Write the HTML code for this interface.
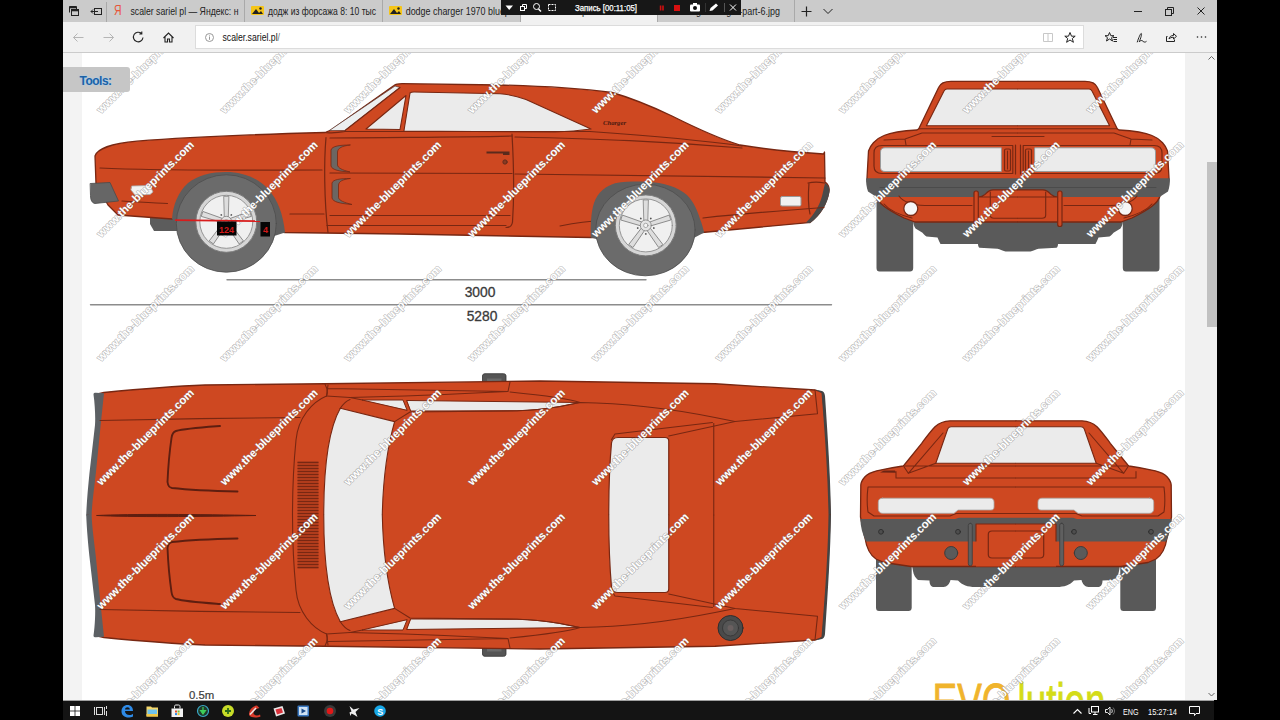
<!DOCTYPE html>
<html><head><meta charset="utf-8"><title>scaler.sariel.pl</title>
<style>
html,body{margin:0;padding:0;background:#000;}
body{width:1280px;height:720px;position:relative;overflow:hidden;font-family:"Liberation Sans",sans-serif;}
.abs{position:absolute;}
#tabbar{left:63px;top:0;width:1154px;height:22px;background:#cbcbcb;}
#addr{left:63px;top:22px;width:1154px;height:31px;background:#f1f1f1;border-bottom:1px solid #cbcbcb;box-sizing:border-box;}
#url{left:195px;top:25px;width:889px;height:24px;background:#fff;border:1px solid #dcdcdc;box-sizing:border-box;}
.tab{top:0;height:22px;font-size:11px;line-height:22px;color:#222;white-space:nowrap;overflow:hidden;box-sizing:border-box;border-right:1px solid #a9a9a9;}
#page{left:63px;top:53px;width:1154px;height:647px;background:#fff;}
#task{left:63px;top:700px;width:1151px;height:20px;background:linear-gradient(#a0a0a0 0,#a0a0a0 1px,#141414 1px);}
</style></head><body>
<div class="abs" id="tabbar"></div>
<div class="abs" id="addr"></div>
<div class="abs" id="url"></div>
<div class="abs" id="page"></div>
<!--CHROME--><!-- tab bar content -->
<svg class="abs" style="left:63px;top:0" width="1154" height="22" viewBox="63 0 1154 22">
 <g fill="none" stroke="#222" stroke-width="1">
  <path d="M69.500 12.500V6.500H76.500V9"/><path d="M69.500 7.500H76.500" stroke-width="1.600"/><rect x="71.500" y="9.500" width="7" height="6" fill="#cbcbcb"/><path d="M71.500 10.500H78.500" stroke-width="1.600"/>
  <rect x="94.500" y="8.500" width="7" height="6"/><path d="M91 11.500H98M93 9.500L91 11.500L93 13.500"/>
 </g>
</svg>
<div class="abs" style="left:106px;top:2px;width:1px;height:20px;background:#a9a9a9"></div>
<div class="abs tab" style="left:107px;width:138px;"><span class="abs" style="left:7px;top:0;color:#e8553a;font-size:14.500px;line-height:21px;transform:scaleX(.72);transform-origin:0 0">Я</span><svg class="abs" style="left:0;top:0" width="138" height="22"><text x="23.500" y="15" font-size="11" fill="#222" textLength="108" lengthAdjust="spacingAndGlyphs">scaler sariel pl — Яндекс: н</text></svg></div>
<div class="abs tab" style="left:245px;width:138px;"><svg class="abs" style="left:6px;top:5px" width="13" height="11"><rect x="0" y="1" width="13" height="9" rx="1" fill="#f5c518"/><path d="M1 9L5 4L8 8L10 6L12 9Z" fill="#222"/><circle cx="9.500" cy="3.500" r="1.200" fill="#222"/></svg><svg class="abs" style="left:0;top:0" width="138" height="22"><text x="23" y="15" font-size="11" fill="#222" textLength="108" lengthAdjust="spacingAndGlyphs">додж из форсажа 8: 10 тыс</text></svg></div>
<div class="abs tab" style="left:383px;width:138px;"><svg class="abs" style="left:6px;top:5px" width="13" height="11"><rect x="0" y="1" width="13" height="9" rx="1" fill="#f5c518"/><path d="M1 9L5 4L8 8L10 6L12 9Z" fill="#222"/><circle cx="9.500" cy="3.500" r="1.200" fill="#222"/></svg><svg class="abs" style="left:0;top:0" width="138" height="22"><text x="22.700" y="15" font-size="11" fill="#222" textLength="121" lengthAdjust="spacingAndGlyphs">dodge charger 1970 blueprints</text></svg></div>
<div class="abs tab" style="left:521px;width:136px;background:#f1f1f1;border-right:none"><svg class="abs" style="left:0;top:0" width="136" height="22"><text x="23" y="15" font-size="11" fill="#222" textLength="100" lengthAdjust="spacingAndGlyphs">The-Blueprints.com - do</text></svg></div>
<div class="abs tab" style="left:657px;width:138px;border-left:1px solid #a9a9a9"><svg class="abs" style="left:0;top:0" width="138" height="22"><text x="23" y="15" font-size="11" fill="#222" textLength="99" lengthAdjust="spacingAndGlyphs">dodge-charger-part-6.jpg</text></svg></div>
<svg class="abs" style="left:795px;top:0" width="422" height="22" viewBox="795 0 422 22" fill="none" stroke="#222" stroke-width="1">
 <path d="M801.500 11.500H811.500M806.500 6.500V16.500" stroke-width="1.200"/>
 <path d="M823.500 9L828 13.500L832.500 9"/>
 <path d="M1134 11.500H1142"/>
 <rect x="1165.500" y="9.500" width="6" height="6"/><path d="M1167.500 9.500V7.500H1173.500V13.500H1171.500"/>
 <path d="M1197.500 7.500L1204.500 14.500M1204.500 7.500L1197.500 14.500"/>
</svg>
<!-- recorder overlay -->
<div class="abs" style="left:501px;top:0;width:240px;height:15px;background:#171717;"></div>
<svg class="abs" style="left:501px;top:0" width="240" height="15" viewBox="501 0 240 15">
 <path d="M505.500 5.500H513L509.200 10Z" fill="#fff"/>
 <g fill="none" stroke="#fff" stroke-width="1"><rect x="520.500" y="6.500" width="4" height="4"/><path d="M522.500 6.500V4.500H526.500V8.500H524.500"/>
 <circle cx="536.500" cy="6.500" r="3"/><path d="M538.500 9L541 11.500" stroke-width="1.500"/>
 <rect x="548.500" y="4.500" width="7" height="6" stroke-dasharray="2 1"/></g>
 <text x="575" y="11" font-size="8.500" fill="#fff" stroke="#fff" stroke-width="0.250" font-family="Liberation Sans, sans-serif" textLength="62" lengthAdjust="spacingAndGlyphs">Запись [00:11:05]</text>
 <rect x="659.800" y="5.500" width="1.600" height="5" fill="#d01010"/><rect x="662.200" y="5.500" width="1.600" height="5" fill="#d01010"/>
 <rect x="674" y="5" width="6" height="6" fill="#d81010"/>
 <rect x="690" y="4.500" width="10" height="7" rx="1" fill="#fff"/><rect x="693" y="3" width="4" height="2" fill="#fff"/><circle cx="695" cy="8" r="2" fill="#0c0c0c"/>
 <path d="M709.500 11L710.500 8L716 3.500L718 5.500L712.500 10.500Z" fill="#fff"/>
 <path d="M724.500 3V12" stroke="#555" stroke-width="1"/><path d="M705.500 3V12" stroke="#333" stroke-width="1"/>
 <path d="M730 4.500L736 10.500M736 4.500L730 10.500" stroke="#fff" stroke-width="1"/>
</svg>
<!-- address bar -->
<svg class="abs" style="left:63px;top:22px" width="1154" height="30" viewBox="63 22 1154 30" fill="none" stroke="#222" stroke-width="1">
 <path d="M73.500 37.500H83.500M77.500 33.500L73.500 37.500L77.500 41.500" stroke="#b5b5b5"/>
 <path d="M103.500 37.500H113.500M109.500 33.500L113.500 37.500L109.500 41.500" stroke="#b5b5b5"/>
 <path d="M141.500 33.500A4.800 4.800 0 1 0 143 37.500M141.800 31.500V34H139.300" stroke-width="1.100"/>
 <path d="M163.500 38L168.500 33L173.500 38M165 37V42H167.500V39H169.500V42H172V37" stroke-width="1.100"/>
 <circle cx="209.500" cy="37.500" r="4" stroke="#999"/><path d="M209.500 36.500V39.800M209.500 34.800V35.600" stroke="#999"/>
 <g stroke="#c8c8c8"><path d="M1043.500 33.500H1052.500V41.500H1043.500ZM1048 33.500V41.500" /></g>
 <path d="M1070 32.500L1071.500 36.200H1075.200L1072.300 38.500L1073.400 42.300L1070 40L1066.600 42.300L1067.700 38.500L1064.800 36.200H1068.500Z"/>
 <path d="M1109.500 32.500L1110.800 35.700H1114L1111.500 37.700L1112.500 41L1109.500 39L1106.500 41L1107.500 37.700L1105 35.700H1108.200Z"/><path d="M1113 37.500H1117M1113.500 39.500H1117M1113.500 41.500H1117"/>
 <path d="M1137.200 42.300C1138.500 38 1140.500 33.500 1141.200 33.400C1142.300 33.800 1140.600 38.500 1139.200 41.800C1140.500 40.300 1142 40.100 1143 41.300C1144 42.400 1145.500 42.300 1146.500 41.300"/>
 <path d="M1167.500 36.500H1166.500V41.500H1174.500V39.500M1169 39C1169.500 36.500 1171 35.500 1173.500 35.500V33.500L1176.500 36.300L1173.500 39V37.300C1171.500 37.300 1170 37.800 1169 39Z"/>
 <g fill="#222" stroke="none"><circle cx="1197.500" cy="37" r="0.800"/><circle cx="1201.500" cy="37" r="0.800"/><circle cx="1205.500" cy="37" r="0.800"/></g>
</svg>
<svg class="abs" style="left:215px;top:25px" width="100" height="24"><text x="7.500" y="16" font-size="10.500" fill="#111" textLength="57.500" lengthAdjust="spacingAndGlyphs">scaler.sariel.pl<tspan fill="#777">/</tspan></text></svg>
<!-- page deco -->
<div class="abs" style="left:63px;top:53px;width:19px;height:647px;background:#f3f3f3"></div>
<div class="abs" style="left:1185px;top:53px;width:32px;height:647px;background:#f1f1f1"></div>
<div class="abs" style="left:1207px;top:162px;width:10px;height:165px;background:#c1c1c1"></div>
<svg class="abs" style="left:1203px;top:52px" width="14" height="648" viewBox="1203 52 14 648" fill="none" stroke="#666" stroke-width="1"><path d="M1208.500 59.500L1211.500 56.500L1214.500 59.500"/><path d="M1208.500 693L1211.500 696L1214.500 693"/></svg>
<div class="abs" style="z-index:5;left:63px;top:67px;width:67px;height:25px;background:#c6c6c6;border-radius:0 3px 3px 0;"></div>
<div class="abs" style="z-index:6;left:79.500px;top:73.500px;font-size:12px;font-weight:bold;color:#1b62a6;letter-spacing:-0.5px;text-shadow:0 0 2px #9ad0ff">Tools:</div>
<!--/CHROME-->
<svg class="abs" style="left:0;top:0" width="1280" height="720" viewBox="0 0 1280 720">
<!--CARS--><defs>
 <g id="rim">
  <circle r="30.500" fill="#d6d6d6" stroke="#7a7a7a" stroke-width="1"/>
  <circle r="26.500" fill="#f0f0f0" stroke="#8c8c8c" stroke-width="0.900"/>
  <g stroke="#808080" stroke-width="0.800" fill="#dedede">
   <path id="spk" d="M-2 -5L-2.600 -25.500H2.600L2 -5Z"/>
   <use href="#spk" transform="rotate(72)"/><use href="#spk" transform="rotate(144)"/><use href="#spk" transform="rotate(216)"/><use href="#spk" transform="rotate(288)"/>
  </g>
  <circle r="5.500" fill="#e4e4e4" stroke="#808080" stroke-width="0.800"/>
  <g fill="#555"><circle cx="0" cy="-8.500" r="0.900" transform="rotate(36)"/><circle cx="0" cy="-8.500" r="0.900" transform="rotate(108)"/><circle cx="0" cy="-8.500" r="0.900" transform="rotate(180)"/><circle cx="0" cy="-8.500" r="0.900" transform="rotate(252)"/><circle cx="0" cy="-8.500" r="0.900" transform="rotate(324)"/></g>
  <circle r="2.200" fill="#f4f4f4" stroke="#808080" stroke-width="0.600"/>
 </g>
</defs>
<!-- ============ SIDE VIEW ============ -->
<g id="side" stroke-linejoin="round" stroke-linecap="round">
 <!-- chassis bits under -->
 <path d="M150 214L178 219V231H154L150 224Z" fill="#5c5c5c"/>
 <!-- body -->
 <path d="M95 156C97 149 112 143.500 137 141.200C170 138.500 230 135 325 132.500L331 130L394 85.500C396 84 398 83.700 402 83.700L500 85C540 86 585 89 612 92.500C635 99 655 108 672 116C700 130 720 139 740 145C770 150 800 152.500 823.500 154L824.500 152L825 182C828 184 829.500 187 829 191C827 203 820 215 810 222.500C775 226 740 229 702 232.500L645 236L591 237.500L400 234L285 232.500L230 225L172 219L118 215L108 205L96 184Z" fill="#ce4821" stroke="#782712" stroke-width="1.3"/>
 <!-- rear bumper dark -->
 <path d="M825 183C828.500 185 830 188 829.500 192C827.500 204 820 216 810 223L806 222.500C815 214 821 203 823 192Z" fill="#4a4a4a"/>
 <!-- front bumper -->
 <path d="M90.500 183.500L110 182.500L118.500 201L95 203.500C92 203 90.500 200 90.500 196Z" fill="#666" stroke="#4a4a4a" stroke-width="0.800"/>
 <!-- front marker light -->
 <path d="M132 186L150 185.500L153 192L150 194.500L135 195L131 190Z" fill="#f2f2f2" stroke="#aaa" stroke-width="0.800"/>
 <!-- rear marker -->
 <rect x="780.500" y="196.500" width="20.500" height="9.500" rx="1.500" fill="#f0f0f0" stroke="#999" stroke-width="1"/>
 <!-- glass -->
 <path d="M329.500 130.400L395 86L400 87.500L345.300 130.300Z" fill="#eceff0" stroke="#5a3a34" stroke-width="0.700"/><path d="M345.300 130.300L400 87.500" stroke="#782712" stroke-width="1.2" fill="none"/>
 <path d="M366 129L406 95.500L400 129.500Z" fill="#ebebeb" stroke="#782712" stroke-width="1.1"/>
 <path d="M404 130.500L410 93C411 92 412 92 414 92L500 93.800C510 94.500 518 96.500 526 99.500L591 129C580 130.500 570 131.500 555 132L404 131Z" fill="#ebebeb" stroke="#782712" stroke-width="1.1"/>
 <!-- body lines -->
 <g fill="none" stroke="#782712" stroke-width="1.2">
  <path d="M325 132.500C330 133.500 340 132 345 131.500L590 131.500C640 135 700 140 742 146"/>
  <path d="M326 137.500C324 160 324 200 328 232.500"/>
  <path d="M512 134C513.500 160 514 200 512.500 222C512 226 510 227.500 506 227.500"/>
  <path d="M100 168C160 171 250 170 322 170M330 173L512 173.500M515 174C600 175 700 176 825 178"/>
  <path d="M122 201C140 202 155 203 167.500 203.500M290 214H324M330 215.500H510M560 226C580 222 590 221 600 221M703 218C740 214 790 210 824 207.500"/>
  <path d="M330 138C400 137 450 137.500 512 136M515 137C600 139 660 141 742 148"/>
  <path d="M808 183C812 182 820 182 824.500 183M809 183C808 195 808 205 810 214"/>
  <path d="M327 225.500H506"/>
 </g>
 <!-- door vents -->
 <path d="M350 145C340 145 332 146 331 150V166C332 170 340 171.500 350 172C342 170 338 168 337.500 165V152C338 148 342 146 350 145Z" fill="#6c6662" stroke="#782712" stroke-width="0.8"/>
 <path d="M350 178.500C340 178.500 333 179.500 332 183V198C333 202 340 203.500 352 204.500C344 202.500 339 200.500 338.500 197.500V185C339 181.500 342 179.500 350 178.500Z" fill="#6c6662" stroke="#782712" stroke-width="0.8"/>
 <!-- door handle -->
 <path d="M486.500 151.500H509.500V155H503V153.500H486.500Z" fill="#5a2a1c"/><circle cx="505" cy="162" r="2.200" fill="#8a3a22" stroke="#5a2a1c" stroke-width="0.800"/>
 <!-- charger badge -->
 <text x="603" y="124.600" font-size="5.500" font-style="italic" font-weight="bold" fill="#4a1a10" font-family="Liberation Serif, serif" textLength="23" lengthAdjust="spacingAndGlyphs">Charger</text>
 <!-- wheel arches -->
 <path d="M172 219C173 205 178 192 188 183C198 175 212 172 226 172C243 172 258 178 268 189C278 200 283 214 285 232.500L262 240H190Z" fill="#5e5e5e"/>
 <path d="M590.800 237.500C590.500 225 591 212 594 203C598 192 606 186 615 183.300C625 181.500 637 181.500 647 181.700C664 182.500 678 187 687 195C694 202 698 212 700 219C702 224 703 228 704.200 232.500L690 240H600Z" fill="#5e5e5e"/>
 <!-- tires -->
 <ellipse cx="226.300" cy="223.500" rx="50" ry="48.700" fill="#6b6b6b" stroke="#4c4c4c" stroke-width="0.800"/>
 <ellipse cx="645.400" cy="230" rx="49.700" ry="45.800" fill="#6b6b6b" stroke="#4c4c4c" stroke-width="0.800"/>
 <use href="#rim" transform="translate(226.300 221.800)"/>
 <use href="#rim" transform="translate(645.800 225.400)"/>
 <!-- dimension lines -->
 <path d="M227 279.700H646M90.500 304.700H831.500" stroke="#8c8c8c" stroke-width="1.400" fill="none"/>
 <text x="480" y="297" font-size="13.800" fill="#3a3a3a" stroke="#3a3a3a" stroke-width="0.300" text-anchor="middle" font-family="Liberation Sans, sans-serif">3000</text>
 <text x="482" y="321.300" font-size="13.800" fill="#3a3a3a" stroke="#3a3a3a" stroke-width="0.300" text-anchor="middle" font-family="Liberation Sans, sans-serif">5280</text>
</g>
<!--C2--><!-- ============ FRONT VIEW ============ -->
<g id="front" stroke-linejoin="round" stroke-linecap="round">
 <defs><g id="fhalf">
  <!-- tire -->
  <path d="M876.500 196H913.200V268C913.200 270.500 912 271.500 910 271.500H879.500C877.500 271.500 876.500 270.500 876.500 268Z" fill="#595959"/>
  <!-- under -->
  <path d="M912 218H1018V251.600H1005.500C1002 250.500 1000 249.500 997.500 248.800L979.500 247.800C978.500 247 978 246 978 244H940.500C939.500 242 938.500 240 937.500 237.500L926.500 236.600C925 235.500 923.500 234 922.500 232.800L915.500 228.500C914 226.500 913.300 224 913 221.600Z" fill="#5a5a5a"/>
  <!-- body -->
  <path d="M1018 81.400H951C944 81.400 940.500 83 938.600 87.500L918.800 128.800L917 130C900 131 890 133 884 135.500C875 139 870 146 868.500 151L867 178L876 196C878 203 886 209 904 218L915 222H1018" fill="#ce4821" stroke="#782712" stroke-width="1.3"/>
  <!-- windshield -->
  <path d="M1018 89H947C945.500 89 944.700 89.500 944 91L926.400 125.700H1018" fill="#ebebeb" stroke="#782712" stroke-width="1.1"/>
  <!-- grille frame -->
  <path d="M1012.800 145.500H882C877 145.500 874 148 874 153V166C874 171 877 173.500 882 173.500H1012.800Z" fill="#ce4821" stroke="#782712" stroke-width="1.2"/>
  <path d="M1001 147.800H885C882 147.800 880.500 149.300 880.500 152V167.500C880.500 170 882 171.500 885 171.500H1001Z" fill="#ebebeb" stroke="#9a9a9a" stroke-width="1"/>
  <rect x="1004.500" y="149" width="6" height="22" rx="1.500" fill="none" stroke="#782712" stroke-width="1.2"/><path d="M1007.500 151V169" stroke="#782712" stroke-width="1.1"/>
  <path d="M1015.500 145V174" stroke="#782712" stroke-width="1.2"/>
  <!-- hood lines -->
  <path d="M918.800 128.800H1018M922 133H1018M922 133L905 139L884 140M905 139L906 145M1018 136.500H992" fill="none" stroke="#782712" stroke-width="1.1"/>
  <!-- bumper -->
  <path d="M866 178.300H1018V197H876.500L868 191.500C866.500 187 866 183 866 178.300Z" fill="#5a5a5a"/><path d="M880 187.500H1018" stroke="#484848" stroke-width="0.800" fill="none"/>
  <!-- valance lines -->
  <path d="M899 196C903 202 910 205 925 205.500H972M884 204C890 211 900 215 912 218" fill="none" stroke="#782712" stroke-width="1.1"/>
  <!-- plate recess -->
  <path d="M1018 189.900H993C989 190 987 192.500 985 194.500C983 196 981 196.800 978.300 197H1018" fill="#ce4821" stroke="#782712" stroke-width="1.1"/><path d="M990.300 192V215C990.300 217.300 991.500 218.300 994 218.300H1018" fill="none" stroke="#782712" stroke-width="1.1"/>
  <!-- fog -->
  <circle cx="910.800" cy="208.500" r="7" fill="#f6f6f6" stroke="#782712" stroke-width="1.3"/>
  <!-- guard -->
  <rect x="974" y="191" width="4.300" height="35.500" rx="2" fill="#ce4821" stroke="#782712" stroke-width="1.2"/>
 </g></defs>
 <use href="#fhalf"/>
 <use href="#fhalf" transform="translate(2036 0) scale(-1 1)"/>
</g>
<!-- ============ REAR VIEW ============ -->
<g id="rear" stroke-linejoin="round" stroke-linecap="round">
 <defs><g id="rhalf">
  <!-- tire -->
  <path d="M876 545H911.700V607.500C911.700 610 910.500 611 908.500 611H879C877 611 876 610 876 607.500Z" fill="#595959"/>
  <!-- under -->
  <path d="M911 560H1016V587H975C968 587 962 585 958 580.500L950.500 580C949.500 584 947 587 943.500 587H934C931 587 929.500 584.500 929.500 580.500L918 580C915.500 578 913.500 575 913 571Z" fill="#5a5a5a"/>
  <!-- body -->
  <path d="M1016 420.800H950C944 421 939 423 935 426.700C929 433 925 439 921.700 443.300L904.200 465L903 466C893 467.500 885 469 876.700 470.800C870 472.500 866.500 475 865 476.700C862.500 479.500 861 482 860.800 485L860.500 517L865 538C866.500 548 870 555 876 559L884 562.500L911 566.500H1016" fill="#ce4821" stroke="#782712" stroke-width="1.3"/>
  <!-- window -->
  <path d="M1016 426.700H951C949.500 426.700 948.600 427.200 947.800 428.700L935.800 463.300H1016" fill="#ebebeb" stroke="#782712" stroke-width="1.1"/>
  <!-- lines -->
  <path d="M943 433L908.300 473.300L904 466.700M908.300 473.300L935.800 463.300M905 466H1016M896 471.500V478H1016M868 487H1016M868 487C867 495 867 505 868 512L874 516H950L956 513.500H1016" fill="none" stroke="#782712" stroke-width="1.1"/>
  <!-- tail light -->
  <path d="M882.500 498.200H990C992.500 498.200 994 499.500 994 502V507C994 509 993 510 991 510H958L954 513.300H882.500C880 513.300 878.300 511.500 878.300 509V502C878.300 499.500 880 498.200 882.500 498.200Z" fill="#ebebeb" stroke="#aaa" stroke-width="0.800"/>
  <!-- bumper -->
  <path d="M860.300 519H955L959 517.800H1016V541.500H866C862.500 534 860.500 527 860.300 519Z" fill="#585858"/>
  <circle cx="881" cy="531.800" r="2.400" fill="#4e4e4e" stroke="#2e2e2e" stroke-width="0.900"/><circle cx="958" cy="531.800" r="2.400" fill="#4e4e4e" stroke="#2e2e2e" stroke-width="0.900"/>
  <!-- plate recess -->
  <path d="M1016 524H976V566.500H1016Z" fill="#ce4821"/>
  <path d="M976 524H1016M976 524V541" fill="none" stroke="#782712" stroke-width="1.1"/>
  <path d="M1016 531H992C989.500 531 988.300 532.200 988.300 534.500V554.500C988.300 556.800 989.500 558 992 558H1016" fill="none" stroke="#782712" stroke-width="1.2"/>
  <!-- exhaust -->
  <circle cx="951.200" cy="553" r="6.500" fill="#5a5a5a" stroke="#3c3c3c" stroke-width="1"/>
  <!-- guard -->
  <rect x="968.300" y="523.300" width="4" height="42.500" rx="2" fill="#5f5f5f" stroke="#3c3c3c" stroke-width="0.800"/>
 </g></defs>
 <use href="#rhalf"/>
 <use href="#rhalf" transform="translate(2032 0) scale(-1 1)"/>
 <path d="M880 472.500L884 470.500H895L896 472.800Z" fill="#6a2414"/>
</g>
<!--MORE2-->
<!--/C2-->
<!--C3--><!-- ============ TOP VIEW ============ -->
<g id="top" stroke-linejoin="round" stroke-linecap="round">
 <defs>
 <g id="thalfFill">
  <!-- mirror/handle -->
  <path d="M482.500 383V376C482.500 374.500 483.500 373.700 485 373.700H503.500C505 373.700 506 374.500 506 376V383Z" fill="#555" stroke="#333" stroke-width="0.800"/>
  <path d="M487 378.500H501.500V382H487Z" fill="#6a6a6a"/>
  <!-- body -->
  <path d="M88 515C88.500 500 89.500 488 91 473.700L96.500 425C97 418 96.500 405 95.500 394.500L104 392.500C140 389 180 386 205 385L325 383.750L540 381L715 383.750L815 390L822.500 392.500C826 430 829 470 830 515" fill="#ce4821" stroke="#782712" stroke-width="1.3"/>
  <!-- front bumper strip -->
  <path d="M86.200 515.500C86.800 500 88 488 89.400 473.700L95 425C95.500 418 95 405 93.500 394.500C93.500 393 94.500 392.800 96 392.800L104 393.200L101 421.700L95.800 473.700C94 490 92 503 91.600 515.500Z" fill="#5c6064"/>
  <!-- rear strip -->
  <path d="M815 389.500L822 391C824 392 824.500 393 825 396C828 440 830.500 480 831 515H828.500C828 480 825.500 440 821.500 393Z" fill="#444"/>
 </g>
 <g id="thalf">
  <!-- windshield -->
  <path d="M323.750 515C323.750 470 328 430 340.300 408.300L394.600 421.600C388 445 383 480 382.300 515" fill="#ebebeb" stroke="#782712" stroke-width="1.1"/>
  <!-- side glass -->
  <path d="M362.500 400H403L407 410Z" fill="#ebebeb" stroke="#782712" stroke-width="1.0"/>
  <path d="M407 400.500L580 402.500L560 406.500C545 409 530 410.500 517 410.800L411 411Z" fill="#ebebeb" stroke="#782712" stroke-width="1.0"/>
  <!-- rear window -->
  <path d="M668.750 515V441C668.750 438.500 667.500 437.500 665 437.500H618C614 437.500 612 439 611.500 443C609.500 465 608.750 490 608.750 515" fill="#ebebeb" stroke="#782712" stroke-width="1.2"/>
  <g fill="none" stroke="#782712" stroke-width="1.1">
   <!-- hood line -->
   <path d="M100 420.500C160 419 240 418 300 417.500"/>
   <!-- cowl curves -->
   <path d="M325 384C328 390 328 393 326.500 396C312 402 298 418 296 440C293.500 465 292.500 490 292.500 515"/>
   <path d="M326.500 396L350 397.500"/>
   <path d="M350 397.500L362.500 400M340 408.750C343 404 346 401 350 399.500"/>
   <!-- door/fender top lines -->
   <path d="M326.500 396L328 385M328 388.500C400 389.500 450 390.500 508 391.500L510 382M350 397.500C400 396.500 460 394 508 391.500M510 392C540 395 570 399 580 402.500"/>
   <!-- roof edge -->
   <path d="M394.600 421.600L410 412L517 410.800C530 410.500 545 409 560 406.500L580 402.500C620 403 665 407.500 715 417.500L735 421.500"/>
   <path d="M611.500 439.500L615 434L712.500 422.500M668.750 436L735 421.500L817.500 413.750M817.500 413.750L815 390"/>
   <path d="M713.750 423.500V515"/>
  </g>
  <!-- hood scoop mark -->
  <path d="M220 426C200 427.500 185 428.500 176 431C173 432 172 434 171.500 438C169 455 168 470 167.500 482C168 486 169 487.500 172 488C190 490 215 491 237.500 491.500" fill="none" stroke="#5e1e10" stroke-width="1.900"/>
  <!-- vent hatch -->
  <rect x="297.500" y="461" width="21" height="54" fill="#b03c1c"/>
  <path d="M297.500 462.500H318.500M297.500 465.500H318.500M297.500 468.500H318.500M297.500 471.500H318.500M297.500 474.500H318.500M297.500 477.500H318.500M297.500 480.500H318.500M297.500 483.500H318.500M297.500 486.500H318.500M297.500 489.500H318.500M297.500 492.500H318.500M297.500 495.500H318.500M297.500 498.500H318.500M297.500 501.500H318.500M297.500 504.500H318.500M297.500 507.500H318.500M297.500 510.500H318.500M297.500 513.500H318.500" stroke="#782712" stroke-width="1.2" fill="none" stroke-linecap="butt"/>
 </g>
 </defs>
 <use href="#thalfFill"/>
 <use href="#thalfFill" transform="translate(0 1030) scale(1 -1)"/>
 <use href="#thalf"/>
 <use href="#thalf" transform="translate(0 1030) scale(1 -1)"/>
 <!-- centre crease -->
 <path d="M97 515.500C130 513.800 200 514.300 256 515.500C200 516.700 130 517.200 97 515.500Z" fill="#5e1e10" stroke="#5e1e10" stroke-width="1"/>
 <!-- fuel cap -->
 <circle cx="730.500" cy="628" r="12.500" fill="#4a4a4a" stroke="#2e2e2e" stroke-width="1"/>
 <circle cx="730.500" cy="628" r="8" fill="#555" stroke="#333" stroke-width="0.800"/>
 <circle cx="730.500" cy="628" r="3" fill="#6a6060"/>
</g>
<!-- 0.5m -->
<text x="189" y="699" font-size="11.400" fill="#3c3c3c" stroke="#3c3c3c" stroke-width="0.200" font-family="Liberation Sans, sans-serif">0.5m</text>
<!-- EVOlution logo -->
<g font-family="Liberation Sans, sans-serif" font-size="51" stroke-width="0.800">
 <text x="932.500" y="720" fill="#f0b42c" stroke="#f0b42c" textLength="78" lengthAdjust="spacingAndGlyphs">EVO</text>
 <text x="1017.500" y="720" fill="#d4dc18" stroke="#d4dc18" textLength="88" lengthAdjust="spacingAndGlyphs">lution</text>
</g>
<!--/C3-->
<!--WM--><!-- watermarks -->
<defs><clipPath id="imgclip"><rect x="82" y="53" width="1103" height="647"/></clipPath></defs>
<g clip-path="url(#imgclip)" font-family="Liberation Sans, sans-serif" font-weight="bold" font-size="11.200" fill="#fff" stroke="#707070" stroke-opacity="0.480" stroke-width="1.200" paint-order="stroke" text-anchor="middle">
<text transform="translate(145.2 65.1) rotate(-44.700)" x="0" y="3.800" textLength="131.500" lengthAdjust="spacingAndGlyphs">www.the-blueprints.com</text>
<text transform="translate(268.9 65.1) rotate(-44.700)" x="0" y="3.800" textLength="131.500" lengthAdjust="spacingAndGlyphs">www.the-blueprints.com</text>
<text transform="translate(392.6 65.1) rotate(-44.700)" x="0" y="3.800" textLength="131.500" lengthAdjust="spacingAndGlyphs">www.the-blueprints.com</text>
<text transform="translate(516.3 65.1) rotate(-44.700)" x="0" y="3.800" textLength="131.500" lengthAdjust="spacingAndGlyphs">www.the-blueprints.com</text>
<text transform="translate(640.0 65.1) rotate(-44.700)" x="0" y="3.800" textLength="131.500" lengthAdjust="spacingAndGlyphs">www.the-blueprints.com</text>
<text transform="translate(763.7 65.1) rotate(-44.700)" x="0" y="3.800" textLength="131.500" lengthAdjust="spacingAndGlyphs">www.the-blueprints.com</text>
<text transform="translate(887.4 65.1) rotate(-44.700)" x="0" y="3.800" textLength="131.500" lengthAdjust="spacingAndGlyphs">www.the-blueprints.com</text>
<text transform="translate(1011.1 65.1) rotate(-44.700)" x="0" y="3.800" textLength="131.500" lengthAdjust="spacingAndGlyphs">www.the-blueprints.com</text>
<text transform="translate(1134.8 65.1) rotate(-44.700)" x="0" y="3.800" textLength="131.500" lengthAdjust="spacingAndGlyphs">www.the-blueprints.com</text>
<text transform="translate(145.2 189.1) rotate(-44.700)" x="0" y="3.800" textLength="131.500" lengthAdjust="spacingAndGlyphs">www.the-blueprints.com</text>
<text transform="translate(268.9 189.1) rotate(-44.700)" x="0" y="3.800" textLength="131.500" lengthAdjust="spacingAndGlyphs">www.the-blueprints.com</text>
<text transform="translate(392.6 189.1) rotate(-44.700)" x="0" y="3.800" textLength="131.500" lengthAdjust="spacingAndGlyphs">www.the-blueprints.com</text>
<text transform="translate(516.3 189.1) rotate(-44.700)" x="0" y="3.800" textLength="131.500" lengthAdjust="spacingAndGlyphs">www.the-blueprints.com</text>
<text transform="translate(640.0 189.1) rotate(-44.700)" x="0" y="3.800" textLength="131.500" lengthAdjust="spacingAndGlyphs">www.the-blueprints.com</text>
<text transform="translate(763.7 189.1) rotate(-44.700)" x="0" y="3.800" textLength="131.500" lengthAdjust="spacingAndGlyphs">www.the-blueprints.com</text>
<text transform="translate(887.4 189.1) rotate(-44.700)" x="0" y="3.800" textLength="131.500" lengthAdjust="spacingAndGlyphs">www.the-blueprints.com</text>
<text transform="translate(1011.1 189.1) rotate(-44.700)" x="0" y="3.800" textLength="131.500" lengthAdjust="spacingAndGlyphs">www.the-blueprints.com</text>
<text transform="translate(1134.8 189.1) rotate(-44.700)" x="0" y="3.800" textLength="131.500" lengthAdjust="spacingAndGlyphs">www.the-blueprints.com</text>
<text transform="translate(145.2 313.1) rotate(-44.700)" x="0" y="3.800" textLength="131.500" lengthAdjust="spacingAndGlyphs">www.the-blueprints.com</text>
<text transform="translate(268.9 313.1) rotate(-44.700)" x="0" y="3.800" textLength="131.500" lengthAdjust="spacingAndGlyphs">www.the-blueprints.com</text>
<text transform="translate(392.6 313.1) rotate(-44.700)" x="0" y="3.800" textLength="131.500" lengthAdjust="spacingAndGlyphs">www.the-blueprints.com</text>
<text transform="translate(516.3 313.1) rotate(-44.700)" x="0" y="3.800" textLength="131.500" lengthAdjust="spacingAndGlyphs">www.the-blueprints.com</text>
<text transform="translate(640.0 313.1) rotate(-44.700)" x="0" y="3.800" textLength="131.500" lengthAdjust="spacingAndGlyphs">www.the-blueprints.com</text>
<text transform="translate(763.7 313.1) rotate(-44.700)" x="0" y="3.800" textLength="131.500" lengthAdjust="spacingAndGlyphs">www.the-blueprints.com</text>
<text transform="translate(887.4 313.1) rotate(-44.700)" x="0" y="3.800" textLength="131.500" lengthAdjust="spacingAndGlyphs">www.the-blueprints.com</text>
<text transform="translate(1011.1 313.1) rotate(-44.700)" x="0" y="3.800" textLength="131.500" lengthAdjust="spacingAndGlyphs">www.the-blueprints.com</text>
<text transform="translate(1134.8 313.1) rotate(-44.700)" x="0" y="3.800" textLength="131.500" lengthAdjust="spacingAndGlyphs">www.the-blueprints.com</text>
<text transform="translate(145.2 437.1) rotate(-44.700)" x="0" y="3.800" textLength="131.500" lengthAdjust="spacingAndGlyphs">www.the-blueprints.com</text>
<text transform="translate(268.9 437.1) rotate(-44.700)" x="0" y="3.800" textLength="131.500" lengthAdjust="spacingAndGlyphs">www.the-blueprints.com</text>
<text transform="translate(392.6 437.1) rotate(-44.700)" x="0" y="3.800" textLength="131.500" lengthAdjust="spacingAndGlyphs">www.the-blueprints.com</text>
<text transform="translate(516.3 437.1) rotate(-44.700)" x="0" y="3.800" textLength="131.500" lengthAdjust="spacingAndGlyphs">www.the-blueprints.com</text>
<text transform="translate(640.0 437.1) rotate(-44.700)" x="0" y="3.800" textLength="131.500" lengthAdjust="spacingAndGlyphs">www.the-blueprints.com</text>
<text transform="translate(763.7 437.1) rotate(-44.700)" x="0" y="3.800" textLength="131.500" lengthAdjust="spacingAndGlyphs">www.the-blueprints.com</text>
<text transform="translate(887.4 437.1) rotate(-44.700)" x="0" y="3.800" textLength="131.500" lengthAdjust="spacingAndGlyphs">www.the-blueprints.com</text>
<text transform="translate(1011.1 437.1) rotate(-44.700)" x="0" y="3.800" textLength="131.500" lengthAdjust="spacingAndGlyphs">www.the-blueprints.com</text>
<text transform="translate(1134.8 437.1) rotate(-44.700)" x="0" y="3.800" textLength="131.500" lengthAdjust="spacingAndGlyphs">www.the-blueprints.com</text>
<text transform="translate(145.2 561.1) rotate(-44.700)" x="0" y="3.800" textLength="131.500" lengthAdjust="spacingAndGlyphs">www.the-blueprints.com</text>
<text transform="translate(268.9 561.1) rotate(-44.700)" x="0" y="3.800" textLength="131.500" lengthAdjust="spacingAndGlyphs">www.the-blueprints.com</text>
<text transform="translate(392.6 561.1) rotate(-44.700)" x="0" y="3.800" textLength="131.500" lengthAdjust="spacingAndGlyphs">www.the-blueprints.com</text>
<text transform="translate(516.3 561.1) rotate(-44.700)" x="0" y="3.800" textLength="131.500" lengthAdjust="spacingAndGlyphs">www.the-blueprints.com</text>
<text transform="translate(640.0 561.1) rotate(-44.700)" x="0" y="3.800" textLength="131.500" lengthAdjust="spacingAndGlyphs">www.the-blueprints.com</text>
<text transform="translate(763.7 561.1) rotate(-44.700)" x="0" y="3.800" textLength="131.500" lengthAdjust="spacingAndGlyphs">www.the-blueprints.com</text>
<text transform="translate(887.4 561.1) rotate(-44.700)" x="0" y="3.800" textLength="131.500" lengthAdjust="spacingAndGlyphs">www.the-blueprints.com</text>
<text transform="translate(1011.1 561.1) rotate(-44.700)" x="0" y="3.800" textLength="131.500" lengthAdjust="spacingAndGlyphs">www.the-blueprints.com</text>
<text transform="translate(1134.8 561.1) rotate(-44.700)" x="0" y="3.800" textLength="131.500" lengthAdjust="spacingAndGlyphs">www.the-blueprints.com</text>
<text transform="translate(145.2 685.1) rotate(-44.700)" x="0" y="3.800" textLength="131.500" lengthAdjust="spacingAndGlyphs">www.the-blueprints.com</text>
<text transform="translate(268.9 685.1) rotate(-44.700)" x="0" y="3.800" textLength="131.500" lengthAdjust="spacingAndGlyphs">www.the-blueprints.com</text>
<text transform="translate(392.6 685.1) rotate(-44.700)" x="0" y="3.800" textLength="131.500" lengthAdjust="spacingAndGlyphs">www.the-blueprints.com</text>
<text transform="translate(516.3 685.1) rotate(-44.700)" x="0" y="3.800" textLength="131.500" lengthAdjust="spacingAndGlyphs">www.the-blueprints.com</text>
<text transform="translate(640.0 685.1) rotate(-44.700)" x="0" y="3.800" textLength="131.500" lengthAdjust="spacingAndGlyphs">www.the-blueprints.com</text>
<text transform="translate(763.7 685.1) rotate(-44.700)" x="0" y="3.800" textLength="131.500" lengthAdjust="spacingAndGlyphs">www.the-blueprints.com</text>
<text transform="translate(887.4 685.1) rotate(-44.700)" x="0" y="3.800" textLength="131.500" lengthAdjust="spacingAndGlyphs">www.the-blueprints.com</text>
<text transform="translate(1011.1 685.1) rotate(-44.700)" x="0" y="3.800" textLength="131.500" lengthAdjust="spacingAndGlyphs">www.the-blueprints.com</text>
<text transform="translate(1134.8 685.1) rotate(-44.700)" x="0" y="3.800" textLength="131.500" lengthAdjust="spacingAndGlyphs">www.the-blueprints.com</text>
</g><!--/WM-->
<g id="scaler">
 <!-- scaler overlay -->
 <path d="M175 220.200L260 221.200" stroke="#d81c1c" stroke-width="1.700" fill="none"/>
 <rect x="217" y="221.500" width="19.500" height="14" fill="#050505"/>
 <text x="219" y="232.500" font-size="9" font-weight="bold" fill="#d01818" font-family="Liberation Sans, sans-serif" textLength="15" lengthAdjust="spacingAndGlyphs">124</text>
 <rect x="260.500" y="222" width="9.500" height="14.500" fill="#050505"/>
 <text x="263" y="233" font-size="9" font-weight="bold" fill="#d01818" font-family="Liberation Sans, sans-serif">4</text>
</g>
<!--MORE-->
<!--/CARS-->
</svg>
<div class="abs" id="task"></div>
<!--TASK--><svg class="abs" style="left:63px;top:700px" width="1154" height="20" viewBox="63 700 1154 20">
 <!-- windows -->
 <g fill="#fff"><rect x="70" y="706" width="4.600" height="4.600"/><rect x="75.400" y="706" width="4.600" height="4.600"/><rect x="70" y="711.400" width="4.600" height="4.600"/><rect x="75.400" y="711.400" width="4.600" height="4.600"/></g>
 <!-- task view -->
 <g fill="none" stroke="#ddd" stroke-width="1"><rect x="96.500" y="707.500" width="6" height="7"/><path d="M94.500 707V715M104.500 707V715M106.500 706V709M106.500 711V716"/></g>
 <!-- edge -->
 <path d="M121.500 711.500C121.500 707.500 124 705 127.500 705C131 705 133 707.500 133 711H125C125 713.500 127 715 129.500 715C131 715 132 714.500 133 714V716.500C131.500 717.300 130 717.500 128.500 717.500C124.500 717.500 121.500 715 121.500 711.500ZM125 709.500H129.800C129.800 708 128.800 707.200 127.500 707.200C126.200 707.200 125.200 708 125 709.500Z" fill="#2e8ae6"/>
 <!-- explorer -->
 <path d="M146.500 706.500H151L152 707.500H158V716.500H146.500Z" fill="#f4d66a"/><rect x="147.500" y="709.500" width="9.500" height="6" fill="#6fc3ee"/><rect x="146.500" y="714" width="11.500" height="2.500" fill="#f0c84a"/>
 <!-- store -->
 <path d="M171.500 708.500H183V717H171.500Z" fill="#f2f2f2"/><path d="M174.500 708.500V706.500C174.500 705.500 175 705 176 705H178.500C179.500 705 180 705.500 180 706.500V708.500" fill="none" stroke="#f2f2f2" stroke-width="1"/><rect x="175" y="710.500" width="2" height="2" fill="#e84a2a"/><rect x="177.600" y="710.500" width="2" height="2" fill="#6fbf3a"/><rect x="175" y="713.100" width="2" height="2" fill="#2e8ae6"/><rect x="177.600" y="713.100" width="2" height="2" fill="#f0c020"/>
 <!-- green arrow -->
 <circle cx="203" cy="711" r="5.500" fill="#1f3a2a" stroke="#3aa8c8" stroke-width="1.200"/><path d="M203 707V712M200.500 710.500L203 714L205.500 710.500Z" fill="#3fd05a" stroke="#3fd05a" stroke-width="1.200"/>
 <!-- yellow green plus -->
 <circle cx="228" cy="711" r="6" fill="#c8dc28"/><path d="M228 708V714M225 711H231" stroke="#2a6a1a" stroke-width="1.800"/>
 <!-- ccleaner -->
 <path d="M249 715C249 710 252 706 257 705.500L259.500 708C256 708.500 253.500 711 253.500 714C255.500 716 258.500 715.500 260 714.500L260.500 716.500C257 718 251 718 249 715Z" fill="#d83a2a"/><path d="M250 714.500L256 708" stroke="#e8e8e8" stroke-width="1.500"/>
 <!-- red card -->
 <path d="M273.500 708.500L282.500 706L285 713.500L276 716.500Z" fill="#e8e8e8"/><path d="M275.500 709.500L281.500 708L283 712.500L277 714.500Z" fill="#d8303a"/>
 <!-- blue media -->
 <rect x="297.500" y="705.500" width="11.500" height="11" rx="1" fill="#3a78c0"/><rect x="299" y="707" width="8.500" height="8" fill="#cfe2f4"/><path d="M301.500 708.500L306 711L301.500 713.500Z" fill="#1a4a8a"/>
 <!-- recorder -->
 <circle cx="330" cy="711" r="6" fill="#3a3a3a"/><circle cx="330" cy="711" r="3.300" fill="#e01818"/>
 <!-- plane -->
 <path d="M349.500 706L353.500 709.500L359.500 708L355.500 712L357.500 717L354.500 715L351.500 713.500L350.500 716L349.500 712.500L351.500 711.500Z" fill="#f0f0f0"/>
 <!-- skype -->
 <circle cx="380" cy="711" r="5.800" fill="#18a8e8"/><text x="377.300" y="714.500" font-size="9" font-weight="bold" fill="#fff" font-family="Liberation Sans, sans-serif">S</text>
 <!-- tray -->
 <path d="M1073.500 713.500L1077.500 709.500L1081.500 713.500" fill="none" stroke="#fff" stroke-width="1.100"/>
 <g fill="none" stroke="#fff" stroke-width="1"><rect x="1091.500" y="706.500" width="7" height="5.500"/><path d="M1093 714.500H1097.500M1095 712V714.500M1089 708V713.500H1091"/></g>
 <path d="M1105.500 709.500H1107.500L1110 707V715L1107.500 712.500H1105.500Z" fill="none" stroke="#fff" stroke-width="0.900"/><path d="M1111.500 709C1112.500 710 1112.500 712 1111.500 713" fill="none" stroke="#fff" stroke-width="0.800"/><path d="M1113 707.500C1115 709.500 1115 712.500 1113 714.500" fill="none" stroke="#888" stroke-width="0.800"/>
 <text x="1123" y="714.500" font-size="8.500" fill="#fff" font-family="Liberation Sans, sans-serif" textLength="15.500" lengthAdjust="spacingAndGlyphs">ENG</text>
 <text x="1148" y="714.500" font-size="8.500" fill="#fff" font-family="Liberation Sans, sans-serif" textLength="29" lengthAdjust="spacingAndGlyphs">15:27:14</text>
 <path d="M1189.500 706.500H1199.500V713.500H1196L1194.500 715.500V713.500H1189.500Z" fill="none" stroke="#fff" stroke-width="1"/>
</svg>
<!--/TASK-->
</body></html>
